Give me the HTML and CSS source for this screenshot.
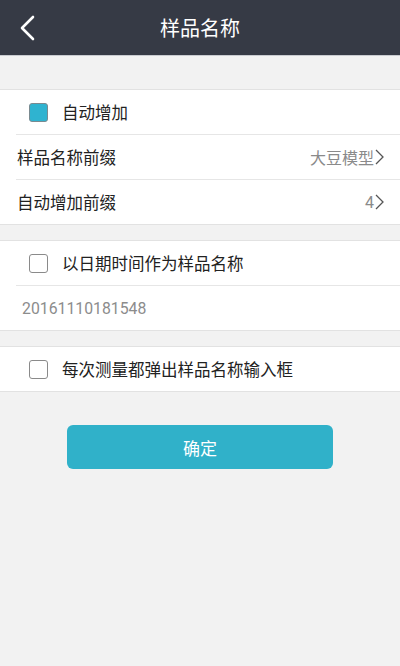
FILE: index.html
```html
<!DOCTYPE html>
<html lang="zh">
<head>
<meta charset="utf-8">
<title>样品名称</title>
<link rel="stylesheet" href="styles.css">
</head>
<body>
<header class="topbar">
  <span class="back">
    <svg width="16" height="26" viewBox="0 0 16 26"><path d="M14 2 L3 13 L14 24" fill="none" stroke="#fff" stroke-width="2.6" stroke-linecap="round" stroke-linejoin="round"/></svg>
  </span>
  <h1 class="title">样品名称</h1>
</header>

<main class="content">
  <section class="group first">
    <div class="row check-row">
      <span class="box checked"></span>
      <span class="label">自动增加</span>
    </div>
    <div class="row link-row">
      <span class="label">样品名称前缀</span>
      <span class="value">大豆模型</span>
      <span class="arrow"><svg width="9" height="16" viewBox="0 0 9 16"><path d="M1 1 L8 8 L1 15" fill="none" stroke="#555" stroke-width="1.3"/></svg></span>
    </div>
    <div class="row link-row">
      <span class="label">自动增加前缀</span>
      <span class="value">4</span>
      <span class="arrow"><svg width="9" height="16" viewBox="0 0 9 16"><path d="M1 1 L8 8 L1 15" fill="none" stroke="#555" stroke-width="1.3"/></svg></span>
    </div>
  </section>

  <section class="group">
    <div class="row check-row">
      <span class="box"></span>
      <span class="label">以日期时间作为样品名称</span>
    </div>
    <div class="row date-row">
      <span class="date">20161110181548</span>
    </div>
  </section>

  <section class="group">
    <div class="row check-row">
      <span class="box"></span>
      <span class="label">每次测量都弹出样品名称输入框</span>
    </div>
  </section>

  <div class="actions">
    <button class="confirm" type="button">确定</button>
  </div>
</main>
</body>
</html>
```

FILE: styles.css
```css
* { box-sizing: border-box; }

html, body {
  margin: 0;
  padding: 0;
  height: 100%;
}

body {
  background: #f2f2f2;
  font-family: Roboto, "Noto Sans CJK SC", "Noto Sans", sans-serif;
  color: #222;
}

.topbar {
  position: relative;
  height: 56px;
  background: #363a45;
  border-bottom: 1px solid #c9cbd0;
  display: flex;
  align-items: center;
  justify-content: center;
}

.back {
  position: absolute;
  left: 19px;
  top: 15px;
  display: flex;
}

.title {
  margin: 0;
  font-size: 20px;
  font-weight: normal;
  color: #fff;
}

.content {
  padding-top: 33px;
}

.group {
  background: #fff;
  border-top: 1px solid #e2e2e2;
  border-bottom: 1px solid #e2e2e2;
  margin-bottom: 15px;
}

.row {
  height: 44px;
  display: flex;
  align-items: center;
  font-size: 16.5px;
  position: relative;
}

.row + .row::before {
  content: "";
  position: absolute;
  left: 16px;
  right: 0;
  top: -1px;
  height: 1px;
  background: #e6e6e6;
}

.row + .row {
  margin-top: 1px;
}

.check-row {
  padding-left: 29px;
}

.box {
  width: 19px;
  height: 19px;
  border: 1.5px solid #8a8a8a;
  border-radius: 3px;
  background: #fff;
  margin-right: 14px;
  flex: none;
}

.box.checked {
  background: #2fb3d0;
  border-color: #7a8a90;
}

.label {
  color: #222;
}

.link-row {
  padding-left: 17px;
  padding-right: 16px;
}

.link-row .label {
  flex: 1;
}

.value {
  color: #8a8a8a;
  font-size: 16px;
}

.arrow {
  display: flex;
  margin-left: 1px;
}

.date-row {
  padding-left: 22px;
}

.date {
  color: #8c8c8c;
  font-size: 15.8px;
}

.actions {
  display: flex;
  justify-content: center;
  padding-top: 18px;
}

.confirm {
  width: 266px;
  height: 44px;
  border: none;
  border-radius: 6px;
  background: #30b1c9;
  color: #fff;
  font-family: inherit;
  font-size: 17px;
}
```
